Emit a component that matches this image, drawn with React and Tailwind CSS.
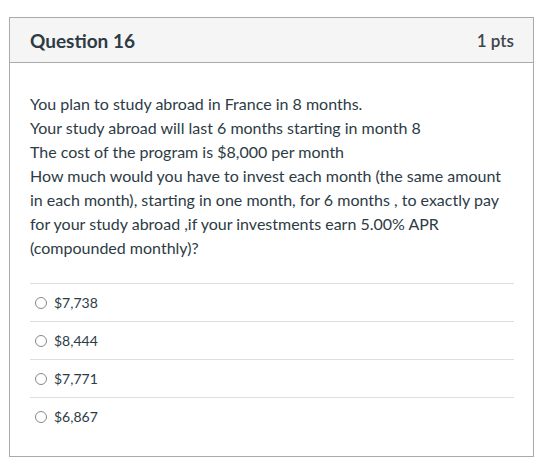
import React from "react";

const answers = ["$7,738", "$8,444", "$7,771", "$6,867"];

export default function App() {
  return (
    <div className="w-[549px] h-[459px] bg-white pt-[17px] pl-[9px]" style={{ fontFamily: "Lato, 'Open Sans', sans-serif" }}>
      <div className="w-[525px] h-[440px] border border-[#aaaaaa] flex flex-col text-[#2d3b45]">
        <div className="h-[45px] shrink-0 bg-[#f5f5f5] border-b border-[#aaaaaa] flex items-center justify-between pl-[20px] pr-[19px]">
          <span className="text-[19px] font-bold leading-none">Question 16</span>
          <span className="text-[17px] font-semibold leading-none text-[#3d454c]">1 pts</span>
        </div>
        <div className="pl-[20px] pr-[19px] pt-[29px]">
          <div className="text-[16px] leading-[24px]">
            <div>You plan to study abroad in France in 8 months.</div>
            <div>Your study abroad will last 6 months starting in month 8</div>
            <div>The cost of the program is $8,000 per month</div>
            <div>
              How much would you have to invest each month (the same amount in each month), starting in one month, for 6 months , to exactly pay for your study abroad ,if your investments earn 5.00% APR (compounded monthly)?
            </div>
          </div>
          <div className="mt-[23px]">
            {answers.map((a) => (
              <div key={a} className="h-[38px] flex items-center border-t border-[#dddddd] pl-[5px]">
                <span className="w-[12px] h-[12px] rounded-full border border-[#888888] bg-white shrink-0" />
                <span className="ml-[7px] text-[14px] text-[#2d3b45]">{a}</span>
              </div>
            ))}
          </div>
        </div>
      </div>
    </div>
  );
}
